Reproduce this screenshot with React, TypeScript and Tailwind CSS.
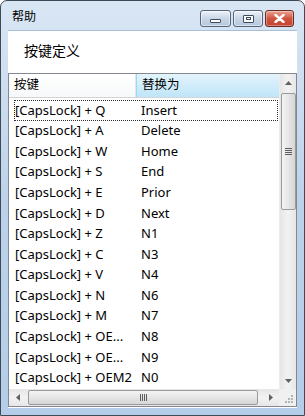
import React from "react";

const rows: [string, string][] = [
    ["[CapsLock] + Q", "Insert"],
    ["[CapsLock] + A", "Delete"],
    ["[CapsLock] + W", "Home"],
    ["[CapsLock] + S", "End"],
    ["[CapsLock] + E", "Prior"],
    ["[CapsLock] + D", "Next"],
    ["[CapsLock] + Z", "N1"],
    ["[CapsLock] + C", "N3"],
    ["[CapsLock] + V", "N4"],
    ["[CapsLock] + N", "N6"],
    ["[CapsLock] + M", "N7"],
    ["[CapsLock] + OE...", "N8"],
    ["[CapsLock] + OE...", "N9"],
    ["[CapsLock] + OEM2", "N0"],
];

const Arrow = ({ dir }: { dir: "up" | "down" | "left" | "right" }) => {
    const pts = {
        up: "0,4 7,4 3.5,0",
        down: "0,0 7,0 3.5,4",
        left: "4,0 4,7 0,3.5",
        right: "0,0 0,7 4,3.5",
    }[dir];
    const vertical = dir === "up" || dir === "down";
    return (
        <svg width={vertical ? 7 : 4} height={vertical ? 4 : 7} viewBox={vertical ? "0 0 7 4" : "0 0 4 7"}>
            <polygon points={pts} fill="#606060" />
        </svg>
    );
};

const TitleButton = ({ kind }: { kind: "min" | "max" | "close" }) => {
    if (kind === "close") {
        return (
            <div className="w-[29px] h-[17px] rounded-[3px] border border-[#6b2a22] bg-gradient-to-b from-[#e8a493] via-[#d0533f] to-[#c4442f] flex items-center justify-center shadow-[inset_0_0_0_1px_rgba(255,255,255,0.35)]">
                <svg width="11" height="9" viewBox="0 0 11 9">
                    <path d="M1.5 1 L9.5 8 M9.5 1 L1.5 8" stroke="#ffffff" strokeWidth="2.4" strokeLinecap="round" />
                </svg>
            </div>
        );
    }
    return (
        <div className={`${kind === "min" ? "w-[31px]" : "w-[30px]"} h-[17px] rounded-[3px] border border-[#56657a] bg-gradient-to-b from-[#eef3f9] via-[#c9d6e6] to-[#b6c7dc] flex items-center justify-center shadow-[inset_0_0_0_1px_rgba(255,255,255,0.5)]`}>
            {kind === "min" ? (
                <div className="w-[11px] h-[4px] mt-[5px] border border-[#3d4b5e] bg-white rounded-[1px]" />
            ) : (
                <div className="w-[11px] h-[8px] border border-[#3d4b5e] bg-white rounded-[1px] flex items-center justify-center">
                    <div className="w-[5px] h-[3px] border border-[#3d4b5e]" />
                </div>
            )}
        </div>
    );
};

export default function App() {
    return (
        <div
            className="w-[305px] h-[416px] bg-white"
            style={{ fontFamily: '"Noto Sans", "Noto Sans CJK SC", sans-serif' }}
        >
            <div className="w-full h-full rounded-t-[7px] border border-[#3f4a57] bg-gradient-to-b from-[#d9e6f4] via-[#bcd2ea] to-[#b4cde8] flex flex-col">
                {/* title bar */}
                <div className="h-[29px] flex items-start pl-[11px] pr-[10px]">
                    <span className="mt-[8px] text-[12px] leading-[16px] text-black">帮助</span>
                    <div className="ml-auto mt-[9px] flex gap-[2px]">
                        <TitleButton kind="min" />
                        <TitleButton kind="max" />
                        <TitleButton kind="close" />
                    </div>
                </div>
                {/* client */}
                <div className="flex-1 mx-[7px] mb-[7px] bg-white flex flex-col border-t border-[#a9bfd6]">
                    <div className="h-[42px] pl-[16px] pt-[10px] text-[14px] leading-[20px] text-black">按键定义</div>
                    <div className="flex-1 mb-[1px] border border-[#828790] flex flex-col text-[13px] text-black">
                        <div className="flex-1 flex min-h-0">
                            <div className="flex-1 flex flex-col overflow-hidden">
                                {/* header */}
                                <div className="h-[24px] shrink-0 flex border-b border-[#d5d5d5] text-[12.5px]">
                                    <div className="w-[127px] pl-[5px] flex items-center bg-gradient-to-b from-white to-[#f7f8f9] border-r border-[#e3e8ee]">
                                        按键
                                    </div>
                                    <div className="flex-1 pl-[5px] flex items-center bg-gradient-to-b from-[#e3f4fc] to-[#bfe5f8] border-l border-[#96d9f9]">
                                        替换为
                                    </div>
                                </div>
                                <div className="mt-[2px] flex flex-col">
                                    {rows.map(([k, v], i) => (
                                        <div
                                            key={i}
                                            className={`h-[20.6px] shrink-0 flex items-center ml-[5px] mr-[1px] ${
                                                i === 0 ? "outline outline-1 outline-dotted outline-[#303030] -outline-offset-1" : ""
                                            }`}
                                        >
                                            <div className="w-[126px] pl-[1px] whitespace-nowrap overflow-hidden">{k}</div>
                                            <div className="pl-[1px] whitespace-nowrap">{v}</div>
                                        </div>
                                    ))}
                                </div>
                            </div>
                            {/* vertical scrollbar */}
                            <div className="w-[17px] bg-gradient-to-r from-[#e6e6e6] via-[#f2f2f2] to-[#e6e6e6] border-l border-[#ececec] flex flex-col items-center">
                                <div className="h-[17px] flex items-center justify-center">
                                    <Arrow dir="up" />
                                </div>
                                <div className="mt-[2px] w-[15px] h-[117px] rounded-[2px] border border-[#9a9a9a] bg-gradient-to-r from-[#f4f4f4] via-[#e6e6e6] to-[#d6d6d6] flex flex-col items-center justify-center gap-[1px]">
                                    <div className="w-[7px] h-[1px] bg-[#5c5c5c]" />
                                    <div className="w-[7px] h-[1px] bg-[#5c5c5c]" />
                                    <div className="w-[7px] h-[1px] bg-[#5c5c5c]" />
                                    <div className="w-[7px] h-[1px] bg-[#5c5c5c]" />
                                </div>
                                <div className="flex-1" />
                                <div className="h-[17px] flex items-center justify-center">
                                    <Arrow dir="down" />
                                </div>
                            </div>
                        </div>
                        {/* horizontal scrollbar */}
                        <div className="h-[17px] flex">
                            <div className="flex-1 flex items-center bg-gradient-to-b from-[#e6e6e6] via-[#f2f2f2] to-[#e6e6e6]">
                                <div className="w-[17px] flex justify-center">
                                    <Arrow dir="left" />
                                </div>
                                <div className="ml-[2px] w-[230px] h-[15px] rounded-[2px] border border-[#9a9a9a] bg-gradient-to-b from-[#f4f4f4] via-[#e6e6e6] to-[#d6d6d6] flex items-center justify-center gap-[1px]">
                                    <div className="w-[1px] h-[7px] bg-[#5c5c5c]" />
                                    <div className="w-[1px] h-[7px] bg-[#5c5c5c]" />
                                    <div className="w-[1px] h-[7px] bg-[#5c5c5c]" />
                                    <div className="w-[1px] h-[7px] bg-[#5c5c5c]" />
                                </div>
                                <div className="flex-1" />
                                <div className="w-[17px] flex justify-center">
                                    <Arrow dir="right" />
                                </div>
                            </div>
                            <div className="w-[17px] bg-[#f0f0f0] relative">
                                <svg width="17" height="17" viewBox="0 0 17 17" className="absolute inset-0">
                                    {[[12, 6], [12, 9], [9, 9], [12, 12], [9, 12], [6, 12]].map(([x, y], i) => (
                                        <rect key={i} x={x} y={y} width="2" height="2" fill="#b5b5b5" />
                                    ))}
                                </svg>
                            </div>
                        </div>
                    </div>
                </div>
            </div>
        </div>
    );
}
